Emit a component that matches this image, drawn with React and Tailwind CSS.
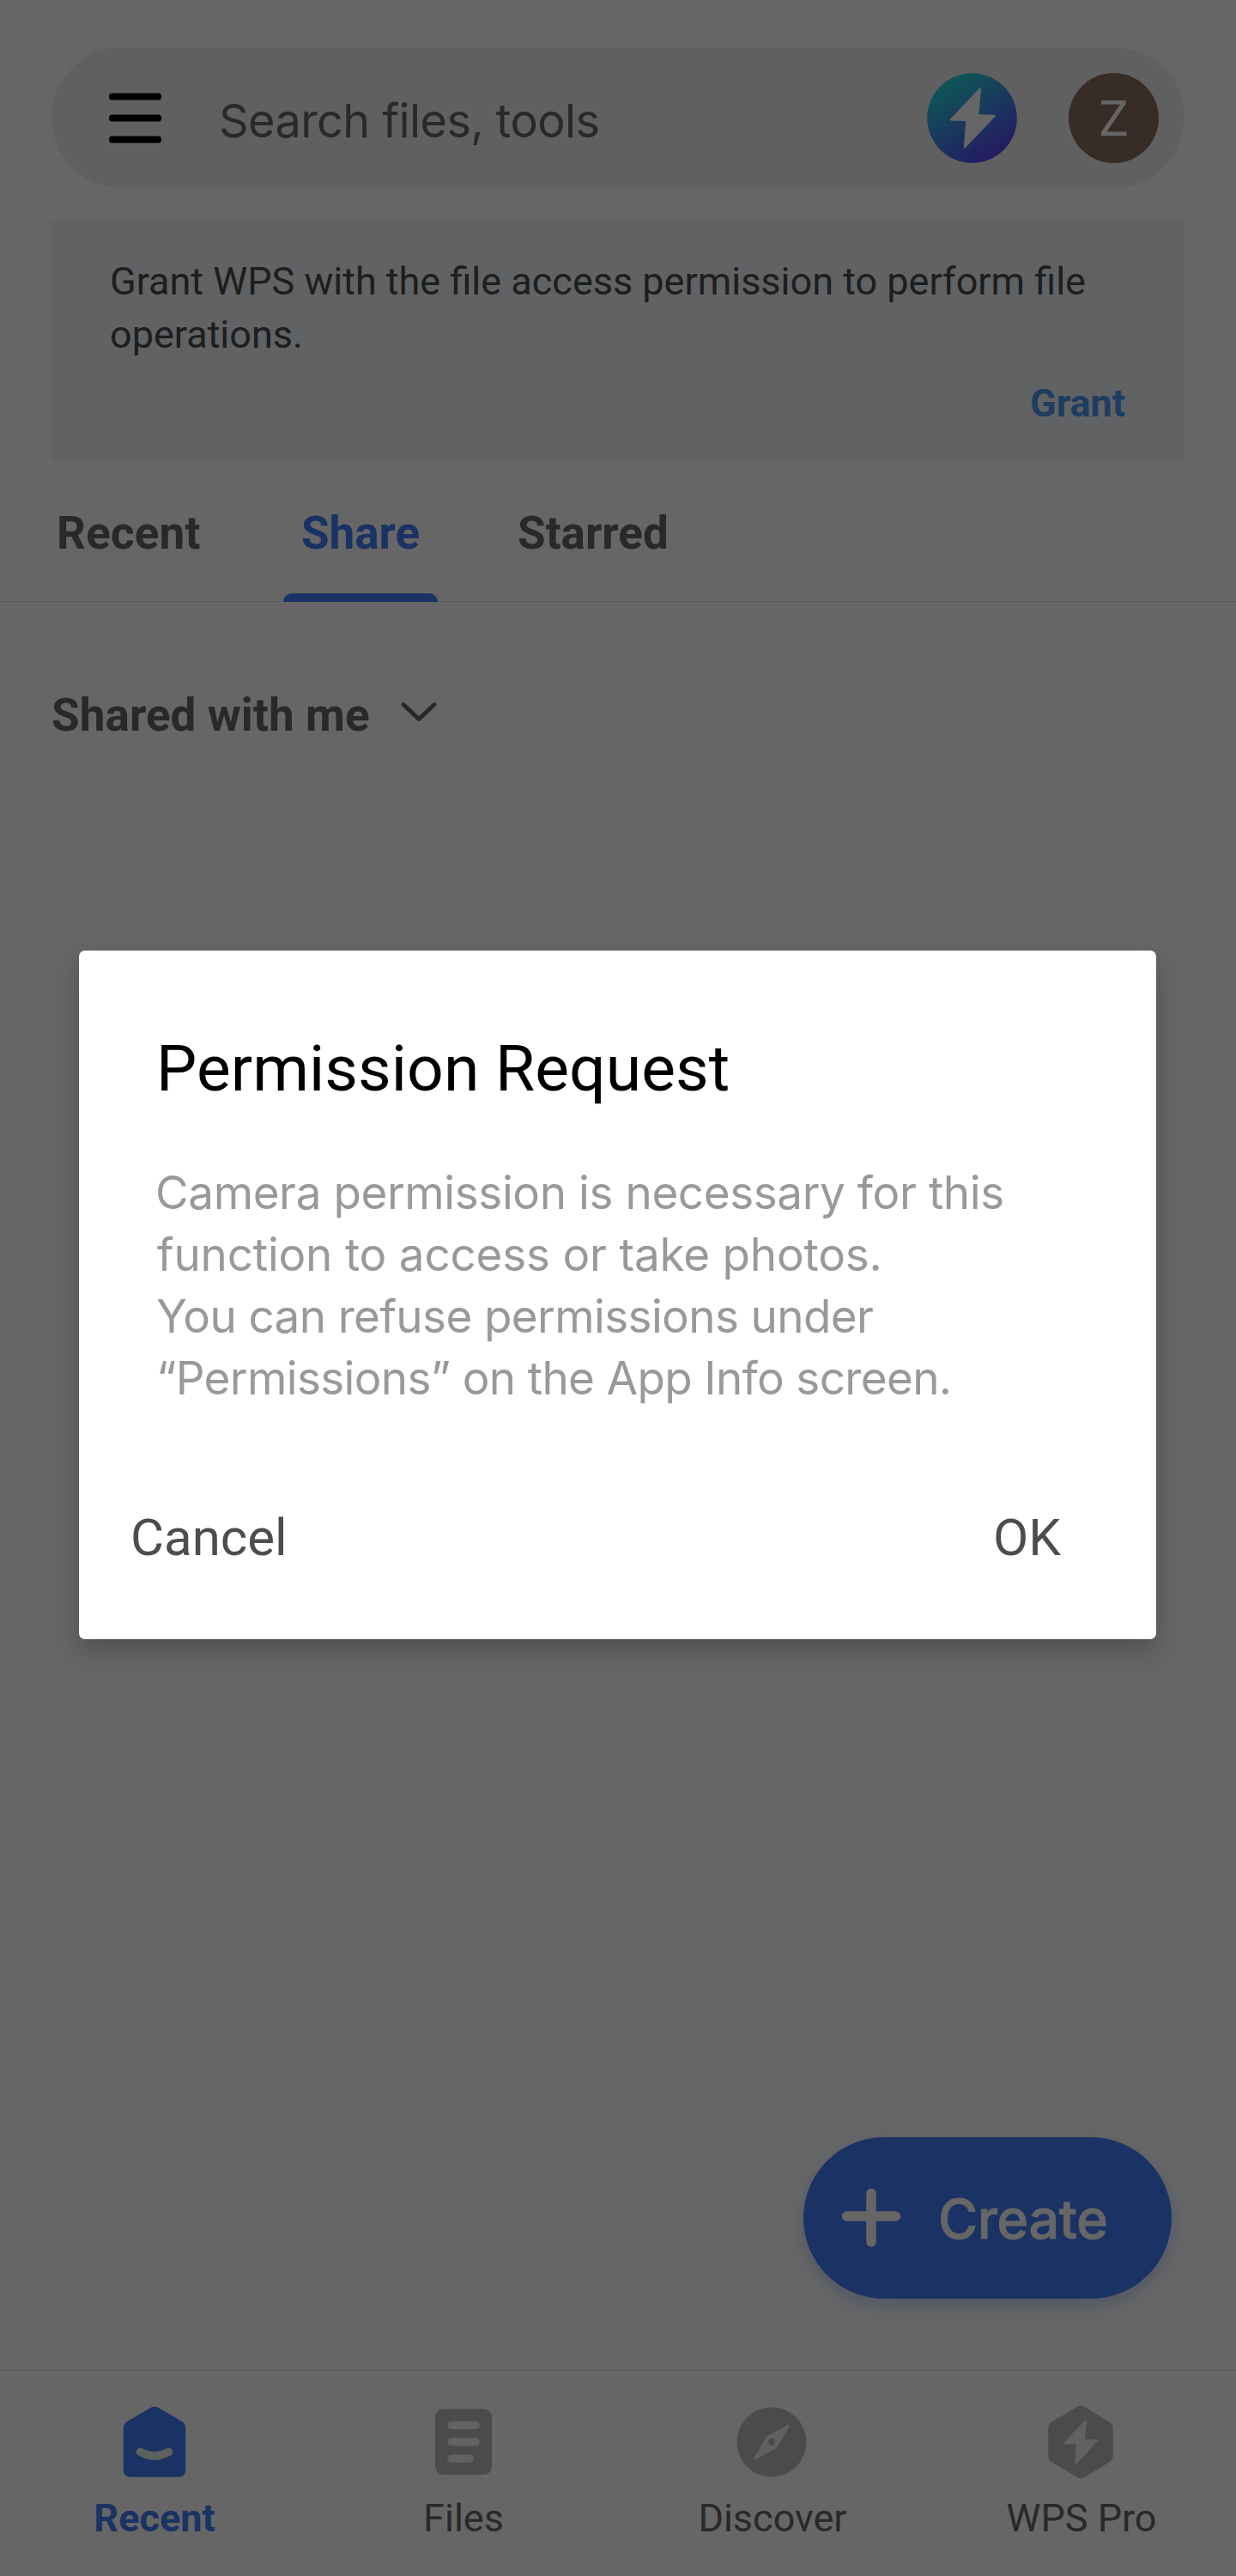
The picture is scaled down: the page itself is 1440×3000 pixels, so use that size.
function MenuIcon() {
  return (
    <svg width="61" height="59" viewBox="0 0 61 59" className="shrink-0">
      <rect x="0" y="0.5" width="61" height="8" rx="3.5" />
      <rect x="0" y="25.5" width="61" height="8" rx="3.5" />
      <rect x="0" y="50.5" width="61" height="8" rx="3.5" />
    </svg>
  )
}

function BoltBadge() {
  return (
    <svg width="105" height="105" viewBox="0 0 105 105" className="shrink-0">
      <defs>
        <linearGradient id="badge" x1="0.2" y1="0.08" x2="0.75" y2="0.95">
          <stop offset="0" stopColor="#25d8d4" />
          <stop offset="0.5" stopColor="#408cec" />
          <stop offset="1" stopColor="#5a42f4" />
        </linearGradient>
      </defs>
      <circle cx="52.5" cy="52.5" r="52.3" fill="url(#badge)" />
      <path
        d="M62 18.3 L27.7 54.5 L46.3 55 L43.8 86.5 L79 49.7 L59.3 49Z"
        fill="#fff"
        stroke="#fff"
        strokeWidth="2"
        strokeLinejoin="round"
      />
    </svg>
  )
}

function HomeIcon() {
  return (
    <svg width="90" height="90" viewBox="0 0 90 90">
      <path
        d="M40.5 5 Q45 2.3 49.5 5 L77 21 Q81.2 23.5 81.2 28.5 V77 Q81.2 85.7 72.5 85.7 H17.5 Q8.8 85.7 8.8 77 V28.5 Q8.8 23.5 13 21Z"
        fill="#447dfa"
      />
      <path d="M28.4 56.4 Q45 66 61.6 56.4" fill="none" stroke="#eef2f2" strokeWidth="9.3" strokeLinecap="round" />
    </svg>
  )
}

function FilesIcon() {
  return (
    <svg width="90" height="90" viewBox="0 0 90 90">
      <rect x="12" y="6.5" width="66" height="76.5" rx="9" fill="#bcbcbc" />
      <g fill="#f6f6f6">
        <rect x="26.3" y="21" width="37.4" height="9" rx="4.5" />
        <rect x="26.3" y="40.3" width="37.4" height="9" rx="4.5" />
        <rect x="26.3" y="59.8" width="30.4" height="9" rx="4.5" />
      </g>
    </svg>
  )
}

function DiscoverIcon() {
  return (
    <svg width="90" height="90" viewBox="0 0 90 90">
      <circle cx="44" cy="45" r="40.5" fill="#bcbcbc" />
      <path
        d="M63.2 26.2 L39.3 39.7 L24.9 63.9 L49.3 50.3Z"
        fill="#f2f2f2"
        stroke="#f2f2f2"
        strokeWidth="3"
        strokeLinejoin="round"
      />
      <circle cx="44" cy="45" r="4.2" fill="#bcbcbc" />
    </svg>
  )
}

function ProIcon() {
  return (
    <svg width="90" height="90" viewBox="0 0 90 90">
      <path
        d="M39.5 4.2 Q44 1.4 48.5 4.2 L77.5 21.5 Q81.7 24 81.7 29 V61 Q81.7 66 77.5 68.5 L48.5 85.8 Q44 88.6 39.5 85.8 L10.5 68.5 Q6.3 66 6.3 61 V29 Q6.3 24 10.5 21.5Z"
        fill="#bcbcbc"
      />
      <path
        d="M50.4 19.5 L24.6 46.6 L40 47.2 L37.8 70.6 L63.8 42.7 L47.7 42.5Z"
        fill="#f2f2f2"
        stroke="#f2f2f2"
        strokeWidth="1.6"
        strokeLinejoin="round"
      />
    </svg>
  )
}

const navItems = [
  { label: 'Recent', Icon: HomeIcon, active: true },
  { label: 'Files', Icon: FilesIcon },
  { label: 'Discover', Icon: DiscoverIcon },
  { label: 'WPS Pro', Icon: ProIcon },
]

function PermissionDialog() {
  return (
    <div className="absolute inset-0 flex items-start bg-black/60 pt-[1107px] pl-[92px]">
      <div
        role="dialog"
        className="flex h-[802px] w-[1255px] flex-col rounded-[7px] bg-white pt-[93px] shadow-[0_14px_30px_rgba(0,0,0,0.21)]"
      >
        <h2 className="pl-[90px] text-[75px] leading-[88px] tracking-[0.05px] text-black">Permission Request</h2>
        <p className="mt-[65px] pl-[89px] font-['Inter',sans-serif] text-[53px] leading-[72px] whitespace-nowrap text-[#999999]">
          <span className="block tracking-[-0.42px]">Camera permission is necessary for this</span>
          <span className="block pl-[2px] tracking-[-0.2px]">function to access or take photos.</span>
          <span className="block pl-[1px] tracking-[-0.63px]">You can refuse permissions under</span>
          <span className="block pl-[1px] tracking-[-0.66px]">“Permissions” on the App Info screen.</span>
        </p>
        <div className="mt-[114px] flex justify-between pr-[111px] pl-[60px] text-[60px] leading-[72px] text-[#4d4d4d]">
          <button>Cancel</button>
          <button>OK</button>
        </div>
      </div>
    </div>
  )
}

export default function App() {
  return (
    <div className="relative flex h-[3000px] w-[1440px] flex-col overflow-hidden bg-white pt-[55px] font-['Roboto',sans-serif]">
      <header className="mx-[60px] flex h-[164px] shrink-0 items-center rounded-full bg-[#f0f0f0] pr-[30px] pl-[67px]">
        <MenuIcon />
        <span className="mt-[6px] ml-[67px] grow font-['Inter',sans-serif] text-[54px] tracking-[-0.6px] text-[#666666]">
          Search files, tools
        </span>
        <BoltBadge />
        <div className="ml-[60px] flex size-[105px] items-center justify-center rounded-full bg-[#8d6e63] pt-[3px] text-[57px] leading-none text-white">
          Z
        </div>
      </header>

      <section className="mx-[60px] mt-[38px] flex h-[279px] shrink-0 flex-col bg-[#f3f5fa] pr-[69px] pl-[68px] pt-[40px] text-[45px]">
        <p className="leading-[62px] text-[#4a4b4b]">
          Grant WPS with the file access permission to perform file
          <br />
          operations.
        </p>
        <button className="mt-[19px] self-end leading-[60px] font-bold text-[#4d98f0]">Grant</button>
      </section>

      <nav className="flex h-[165px] shrink-0 border-b border-[#e2e2e2] pl-[45px] text-[53px] leading-[60px] font-bold text-[#666666]">
        <button className="mr-[75px] w-[210px] pt-[55px] pb-[49px] pl-[21px] text-left tracking-[0.2px]">Recent</button>
        <button className="relative w-[180px] pt-[55px] pb-[49px] text-[#447dfa]">
          Share
          <span className="absolute inset-x-0 -bottom-px h-[10px] rounded-t-[10px] bg-[#447dfa]" />
        </button>
        <button className="ml-[72px] px-[21px] pt-[55px] pb-[49px]">Starred</button>
      </nav>

      <div className="mt-[102px] flex items-center pl-[60px] text-[53px] leading-[60px] font-bold tracking-[0.08px] text-[#666666]">
        Shared with me
        <svg width="46" height="60" viewBox="0 0 46 60" className="ml-[34px]" fill="none">
          <path d="M5 17.5 L23 34.5 L41 17.5" stroke="#606060" strokeWidth="4.8" strokeLinecap="round" strokeLinejoin="round" />
        </svg>
      </div>

      <footer className="mt-auto grid h-[240px] shrink-0 grid-cols-4 border-t border-[#e2e2e2] pt-[38px]">
        {navItems.map(({ label, Icon, active }) => (
          <button
            key={label}
            className={
              active
                ? 'flex flex-col items-center gap-[17px] font-bold text-[#447dfa]'
                : 'flex flex-col items-center gap-[17px] text-[#666666]'
            }
          >
            <Icon />
            <span className="text-[45px] leading-[54px]">{label}</span>
          </button>
        ))}
      </footer>

      <button className="absolute right-[75px] bottom-[323px] flex h-[188px] w-[429px] items-center rounded-full bg-[#447dfa] pl-[44px] text-white shadow-[0_8px_20px_rgba(68,125,250,0.3)]">
        <svg width="70" height="70" viewBox="0 0 70 70" stroke="#fff" strokeWidth="11.5" strokeLinecap="round">
          <path d="M6.5 33 H63.5 M35 6.5 V63" />
        </svg>
        <span className="mt-[3px] ml-[43px] font-['Inter',sans-serif] text-[63px] font-medium tracking-[-0.5px] [-webkit-text-stroke:0.8px_white]">
          Create
        </span>
      </button>

      <PermissionDialog />
    </div>
  )
}
